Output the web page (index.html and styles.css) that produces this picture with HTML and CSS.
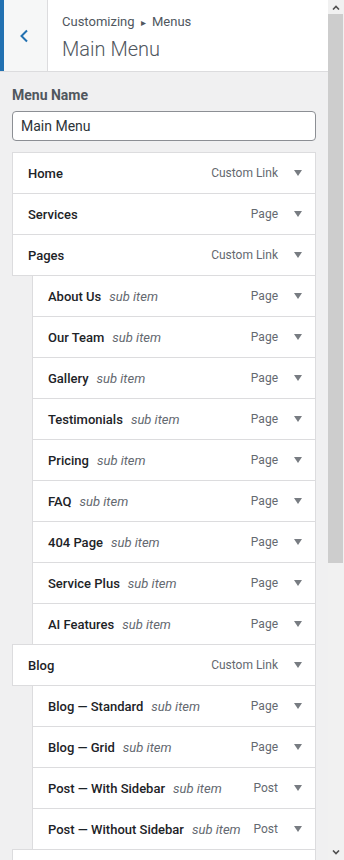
FILE: index.html
```html
<!DOCTYPE html>
<html lang="en">
<head>
    <meta charset="UTF-8">
    <meta name="viewport" content="width=device-width, initial-scale=1.0">
    <title>Customizing Menus | Main Menu</title>
    <link rel="stylesheet" href="styles.css">
</head>
<body>
    <div class="frame">
        <!-- Customizer Panel -->
        <div class="panel">
            <header class="section-head">
                <button class="back-btn" aria-label="Back">
                    <svg width="10" height="14" viewBox="0 0 10 14"><path d="M8 1.5 2.5 7 8 12.5" fill="none" stroke="#2271b1" stroke-width="2"/></svg>
                </button>
                <div class="head-title">
                    <span class="crumbs">Customizing <span class="sep">&#9656;</span> Menus</span>
                    <h2>Main Menu</h2>
                </div>
            </header>

            <div class="section-body">
                <label class="field-label" for="menu-name">Menu Name</label>
                <input type="text" id="menu-name" class="field-input" value="Main Menu">

                <ul class="menu-items">
                    <li class="item"><span class="item-title">Home</span><span class="item-type">Custom Link</span><span class="toggle"></span></li>
                    <li class="item"><span class="item-title">Services</span><span class="item-type">Page</span><span class="toggle"></span></li>
                    <li class="item"><span class="item-title">Pages</span><span class="item-type">Custom Link</span><span class="toggle"></span></li>
                    <li class="item sub"><span class="item-title">About Us</span><em class="sub-label">sub item</em><span class="item-type">Page</span><span class="toggle"></span></li>
                    <li class="item sub"><span class="item-title">Our Team</span><em class="sub-label">sub item</em><span class="item-type">Page</span><span class="toggle"></span></li>
                    <li class="item sub"><span class="item-title">Gallery</span><em class="sub-label">sub item</em><span class="item-type">Page</span><span class="toggle"></span></li>
                    <li class="item sub"><span class="item-title">Testimonials</span><em class="sub-label">sub item</em><span class="item-type">Page</span><span class="toggle"></span></li>
                    <li class="item sub"><span class="item-title">Pricing</span><em class="sub-label">sub item</em><span class="item-type">Page</span><span class="toggle"></span></li>
                    <li class="item sub"><span class="item-title">FAQ</span><em class="sub-label">sub item</em><span class="item-type">Page</span><span class="toggle"></span></li>
                    <li class="item sub"><span class="item-title">404 Page</span><em class="sub-label">sub item</em><span class="item-type">Page</span><span class="toggle"></span></li>
                    <li class="item sub"><span class="item-title">Service Plus</span><em class="sub-label">sub item</em><span class="item-type">Page</span><span class="toggle"></span></li>
                    <li class="item sub"><span class="item-title">AI Features</span><em class="sub-label">sub item</em><span class="item-type">Page</span><span class="toggle"></span></li>
                    <li class="item"><span class="item-title">Blog</span><span class="item-type">Custom Link</span><span class="toggle"></span></li>
                    <li class="item sub"><span class="item-title">Blog &mdash; Standard</span><em class="sub-label">sub item</em><span class="item-type">Page</span><span class="toggle"></span></li>
                    <li class="item sub"><span class="item-title">Blog &mdash; Grid</span><em class="sub-label">sub item</em><span class="item-type">Page</span><span class="toggle"></span></li>
                    <li class="item sub"><span class="item-title">Post &mdash; With Sidebar</span><em class="sub-label">sub item</em><span class="item-type">Post</span><span class="toggle"></span></li>
                    <li class="item sub"><span class="item-title">Post &mdash; Without Sidebar</span><em class="sub-label">sub item</em><span class="item-type">Post</span><span class="toggle"></span></li>
                    <li class="item"></li>
                </ul>
            </div>
        </div>

        <!-- Scrollbar -->
        <div class="scrollbar">
            <div class="sb-btn"><svg width="8" height="5" viewBox="0 0 8 5"><path d="M1 4.5 4 1.5 7 4.5" fill="none" stroke="#505050" stroke-width="1.6"/></svg></div>
            <div class="sb-thumb"></div>
            <div class="sb-track"></div>
            <div class="sb-btn"><svg width="8" height="5" viewBox="0 0 8 5"><path d="M1 0.5 4 3.5 7 0.5" fill="none" stroke="#505050" stroke-width="1.6"/></svg></div>
        </div>
    </div>
</body>
</html>
```

FILE: styles.css
```css
/* General Styles */
body {
    margin: 0;
    font-family: Roboto, "Noto Sans", sans-serif;
    background: #f0f0f1;
    color: #1d2327;
    height: 860px;
    overflow: hidden;
}

.frame {
    display: flex;
    height: 860px;
}

.panel {
    width: 328px;
    flex-shrink: 0;
    overflow: hidden;
}

/* Section header */
.section-head {
    display: flex;
    height: 71px;
    background: #fff;
    border-bottom: 1px solid #dcdcde;
}

.back-btn {
    width: 48px;
    padding: 0 4px 0 0;
    background: #f6f7f7;
    border: none;
    border-left: 4px solid #2271b1;
    border-right: 1px solid #dcdcde;
    display: flex;
    align-items: center;
    justify-content: center;
}

.head-title {
    padding: 13px 14px 0;
}

.crumbs {
    display: block;
    font-size: 13px;
    line-height: 17px;
    color: #50575e;
}

.crumbs .sep {
    font-size: 10px;
    margin: 0 3px;
}

.head-title h2 {
    margin: 6px 0 0;
    font-size: 20px;
    font-weight: 300;
    line-height: 24px;
    color: #50575e;
}

/* Section body */
.section-body {
    padding: 13px 12px 0;
}

.field-label {
    display: block;
    font-size: 14px;
    font-weight: 700;
    line-height: 20px;
    color: #50575e;
    margin-bottom: 6px;
}

.field-input {
    box-sizing: border-box;
    width: 100%;
    height: 30px;
    padding: 0 8px;
    border: 1px solid #8c8f94;
    border-radius: 4px;
    font-family: inherit;
    font-size: 14px;
    color: #2c3338;
    background: #fff;
}

.menu-items {
    list-style: none;
    margin: 11px 0 0;
    padding: 0;
}

.item {
    display: flex;
    align-items: center;
    height: 40px;
    margin-top: -1px;
    padding: 0 13px 0 15px;
    background: #fff;
    border: 1px solid #dcdcde;
    font-size: 13px;
}

.item:first-child {
    margin-top: 0;
}

.item.sub {
    margin-left: 20px;
}

.item-title {
    font-weight: 500;
    color: #1d2327;
    white-space: nowrap;
}

.sub-label {
    margin-left: 8px;
    color: #646970;
    white-space: nowrap;
}

.item-type {
    margin-left: auto;
    font-size: 12px;
    color: #646970;
    white-space: nowrap;
}

.toggle {
    width: 0;
    height: 0;
    margin-left: 16px;
    border-left: 4px solid transparent;
    border-right: 4px solid transparent;
    border-top: 6px solid #787c82;
}

/* Scrollbar */
.scrollbar {
    width: 16px;
    display: flex;
    flex-direction: column;
    background: #f1f1f1;
}

.sb-btn {
    height: 14px;
    display: flex;
    align-items: center;
    justify-content: center;
}

.sb-btn:last-child {
    height: 15px;
}

.sb-thumb {
    height: 549px;
    margin-right: 1px;
    background: #cdcdcd;
}

.sb-track {
    flex: 1;
}
```
